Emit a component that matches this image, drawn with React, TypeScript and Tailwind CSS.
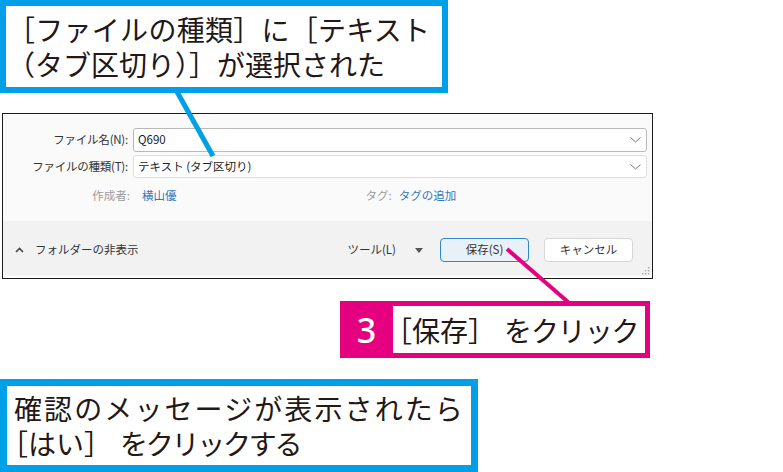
const BLUE = '#00a0e9'
const PINK = '#e4007f'

function Chevron() {
  return (
    <svg width="11" height="6" viewBox="0 0 11 6" className="shrink-0">
      <polyline points="0.5,0.5 5.5,5 10.5,0.5" fill="none" stroke="#7a7a7a" strokeWidth="1" />
    </svg>
  )
}

function Field({ label, value, focused }: { label: string; value: string; focused?: boolean }) {
  return (
    <div className="flex items-center">
      <div className="w-[125px] text-right text-[11.5px] text-[#333] tracking-[-0.02em]">{label}</div>
      <div
        className={`ml-[5px] w-[514px] flex items-center justify-between pl-[4px] pr-[5px] bg-white border rounded-[3px] text-[11.5px] text-[#222] ${
          focused ? 'h-[24px] border-[#b9b9b9]' : 'h-[23px] border-[#dedede]'
        }`}
      >
        <span>{value}</span>
        <Chevron />
      </div>
    </div>
  )
}

function SaveDialog() {
  return (
    <div className="mt-[20px] ml-[2px] w-[651px] h-[166px] border border-[#1c1c1c] bg-white flex flex-col">
      <div className="h-[107px] bg-[#fafafa] flex flex-col">
        <div className="mt-[14px]">
          <Field label="ファイル名(N):" value="Q690" focused />
        </div>
        <div className="mt-[3px]">
          <Field label="ファイルの種類(T):" value="テキスト (タブ区切り)" />
        </div>
        <div className="mt-[7px] h-[22px] flex items-center text-[11.5px]">
          <div className="w-[127px] text-right text-[#9a9a9a]">作成者:</div>
          <div className="ml-[12px] text-[#3277bd]">横山優</div>
          <div className="ml-[189px] text-[#9a9a9a]">タグ:</div>
          <div className="ml-[7px] text-[#3277bd]">タグの追加</div>
        </div>
      </div>
      <div className="relative h-[55px] bg-[#f2f2f2] rounded-b-[7px] flex items-center pt-[3px] pr-[19px] text-[11.5px] text-[#333]">
        <svg width="9" height="6" viewBox="0 0 9 6" className="ml-[12px]">
          <polyline points="1,5 4.5,1.5 8,5" fill="none" stroke="#444" strokeWidth="1.6" />
        </svg>
        <span className="ml-[11px]">フォルダーの非表示</span>
        <div className="flex-1" />
        <span>ツール(L)</span>
        <svg width="8" height="5" viewBox="0 0 8 5" className="ml-[19px]">
          <polygon points="0,0 8,0 4,5" fill="#555" />
        </svg>
        <button className="ml-[17px] w-[89px] h-[24px] rounded-[4px] border border-[#2f86c8] bg-[#e8f0f8] text-[#333]">
          保存(S)
        </button>
        <button className="ml-[15px] w-[89px] h-[24px] rounded-[4px] border border-[#d6d6d6] bg-white text-[#333]">
          キャンセル
        </button>
        <svg width="9" height="9" viewBox="0 0 9 9" className="absolute right-[2px] bottom-[1px]">
          {[
            [7, 1],
            [7, 4],
            [4, 4],
            [7, 7],
            [4, 7],
            [1, 7],
          ].map(([x, y]) => (
            <rect key={`${x}-${y}`} x={x} y={y} width="1.4" height="1.4" fill="#aaa" />
          ))}
        </svg>
      </div>
    </div>
  )
}

export default function App() {
  return (
    <div className="relative w-[783px] h-[472px] overflow-hidden bg-white text-[#231815] font-['Noto_Sans_CJK_JP','Noto_Sans',sans-serif]">
      {/* top callout */}
      <div
        className="w-[448px] h-[93px] border-[6px] flex flex-col justify-center pl-[1px] text-[28px] leading-[35px]"
        style={{ borderColor: BLUE }}
      >
        <div className="tracking-[0.01em]">［ファイルの種類］に［テキスト</div>
        <div>（タブ区切り）］が選択された</div>
      </div>

      <SaveDialog />

      {/* step callout */}
      <div className="mt-[22px] ml-[340px] w-[310px] h-[57px] flex py-[5px] pr-[5px]" style={{ background: PINK }}>
        <div className="w-[53px] flex items-center justify-center text-white text-[34px] leading-none font-medium font-['Noto_Sans',sans-serif]">
          3
        </div>
        <div className="flex-1 bg-white flex items-center pl-[5px] text-[28px] leading-none">
          <span className="[font-feature-settings:'halt']">［</span>
          <span>保存］</span>
          <span className="ml-[8px] tracking-[-0.04em]">をクリック</span>
        </div>
      </div>

      {/* bottom callout */}
      <div
        className="mt-[21px] w-[478px] h-[93px] border-[7px] flex flex-col justify-center pl-[7px] text-[28px] leading-[35px]"
        style={{ borderColor: BLUE }}
      >
        <div className="tracking-[0.075em]">確認のメッセージが表示されたら</div>
        <div>
          <span className="[font-feature-settings:'halt']">［</span>
          <span>はい］</span>
          <span className="ml-[8px] tracking-[-0.08em]">をクリックする</span>
        </div>
      </div>

      {/* leader lines */}
      <svg width="783" height="472" className="absolute inset-0 pointer-events-none">
        <line x1="176" y1="90" x2="213" y2="156" stroke={BLUE} strokeWidth="5" />
        <line x1="507" y1="249" x2="568" y2="302" stroke={PINK} strokeWidth="4" />
      </svg>
    </div>
  )
}
